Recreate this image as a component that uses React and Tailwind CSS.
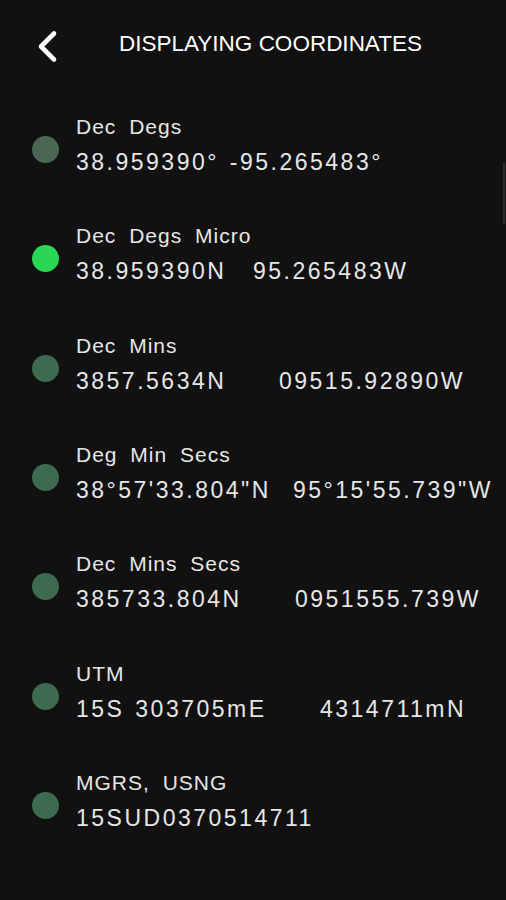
import React from 'react';

const rows = [
  { label: 'Dec Degs', a: '38.959390° -95.265483°', dot: 'bg-[#4a6753]' },
  { label: 'Dec Degs Micro', a: '38.959390N', b: '95.265483W', w: 'w-[177px]', dot: 'bg-[#29d754]' },
  { label: 'Dec Mins', a: '3857.5634N', b: '09515.92890W', w: 'w-[203px]', dot: 'bg-[#3e6a4f]' },
  { label: 'Deg Min Secs', a: '38°57\'33.804"N', b: '95°15\'55.739"W', w: 'w-[217px]', dot: 'bg-[#3e6a4f]' },
  { label: 'Dec Mins Secs', a: '385733.804N', b: '0951555.739W', w: 'w-[219px]', dot: 'bg-[#3e6a4f]' },
  { label: 'UTM', a: '15S 303705mE', b: '4314711mN', w: 'w-[244px]', dot: 'bg-[#3e6a4f]' },
  { label: 'MGRS, USNG', a: '15SUD0370514711', dot: 'bg-[#3e6a4f]' },
];

const Row = ({ label, a, b, w, dot }) => (
  <div className="h-[109.33px] flex items-start">
    <div className={`ml-[32px] mt-[26px] w-[27px] h-[27px] rounded-full shrink-0 ${dot}`} />
    <div className="ml-[17px] flex flex-col text-[#e6e6e6] whitespace-nowrap">
      <div className="text-[21px] leading-[34px] tracking-[1px] [word-spacing:6px]">{label}</div>
      <div className="text-[23px] leading-[36px] tracking-[2.5px] [word-spacing:2px] flex">
        <span className={b ? `inline-block ${w}` : ''}>{a}</span>
        {b && <span>{b}</span>}
      </div>
    </div>
  </div>
);

export default function App() {
  return (
    <div className="relative w-[506px] h-[900px] bg-[#111111] overflow-hidden font-['Liberation_Sans',Arial,sans-serif]">
      {/* Header */}
      <header className="h-[110px] flex items-start pt-[30px]">
        <button className="ml-[36px] w-[22px] h-[33px] flex items-center justify-center">
          <svg width="22" height="33" viewBox="0 0 22 33" fill="none">
            <polyline points="18,3.5 5,16.5 18,29.5" stroke="#ffffff" strokeWidth="4.6" strokeLinecap="round" strokeLinejoin="round" />
          </svg>
        </button>
        <h1 className="ml-[61px] text-[22.5px] leading-[28px] text-white">DISPLAYING COORDINATES</h1>
      </header>

      {/* List */}
      <div className="flex flex-col">
        {rows.map((r) => (
          <Row key={r.label} {...r} />
        ))}
      </div>

      {/* scroll indicator */}
      <div className="absolute right-[1px] top-[162px] w-[2px] h-[62px] bg-[#2e2e2e] rounded-full" />
    </div>
  );
}
